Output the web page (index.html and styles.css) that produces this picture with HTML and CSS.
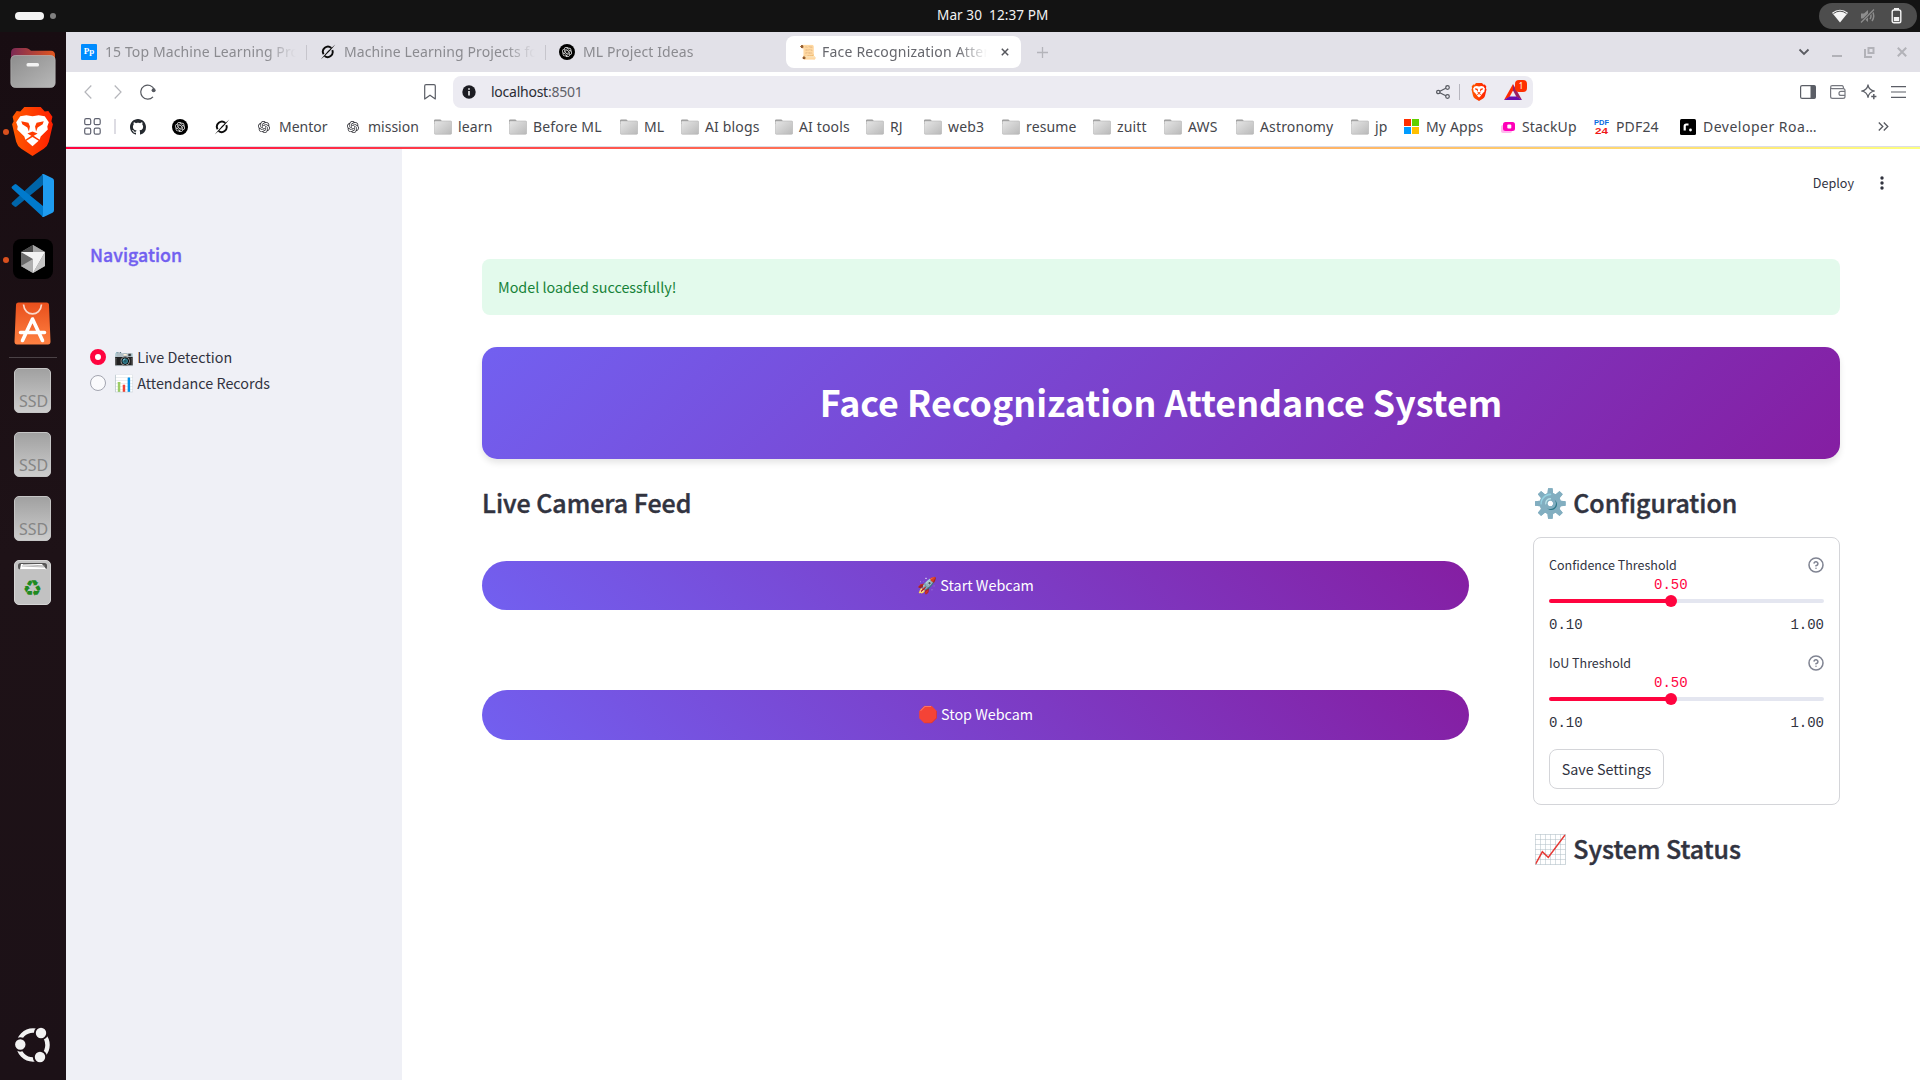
FILE: index.html
```html
<!DOCTYPE html>
<html lang="en">
<head>
<meta charset="utf-8">
<title>Face Recognization Attendance System</title>
<link rel="stylesheet" href="styles.css">
</head>
<body>
<svg class="defs" width="0" height="0" aria-hidden="true">
  <defs>
    <linearGradient id="folderFill" x1="0" y1="0" x2="1" y2="1"><stop offset="0" stop-color="#e6e6e6"/><stop offset="1" stop-color="#b9b9b9"/></linearGradient>
    <linearGradient id="filesBack" x1="0" y1="0" x2="1" y2="0"><stop offset="0" stop-color="#7c2a55"/><stop offset="1" stop-color="#e2561f"/></linearGradient>
    <linearGradient id="filesFront" x1="0" y1="0" x2="1" y2="1"><stop offset="0" stop-color="#8d8d8d"/><stop offset="1" stop-color="#b8b8b8"/></linearGradient>
    <linearGradient id="braveFill" x1="0" y1="0" x2="1" y2="0"><stop offset="0" stop-color="#ff5a00"/><stop offset="1" stop-color="#ff1f00"/></linearGradient>
    <linearGradient id="diskFill" x1="0" y1="0" x2="0" y2="1"><stop offset="0" stop-color="#a0a0a0"/><stop offset="1" stop-color="#cdcdcd"/></linearGradient>
    <linearGradient id="bagFill" x1="0" y1="0" x2="0" y2="1"><stop offset="0" stop-color="#e84f1c"/><stop offset="1" stop-color="#ff8142"/></linearGradient>
    <symbol id="folder" viewBox="0 0 18 16"><path d="M0 3V1.500Q0 .4 1.200 .4H6.500L8 2.200V5H0Z" fill="#9a9a9a"/><rect x=".3" y="2" width="17.400" height="13.300" rx="1.200" fill="url(#folderFill)" stroke="#b5b5b5" stroke-width=".6"/></symbol>
    <symbol id="knot" viewBox="0 0 24 24"><path d="M22.2819 9.8211a5.9847 5.9847 0 0 0-.5157-4.9108 6.0462 6.0462 0 0 0-6.5098-2.9A6.0651 6.0651 0 0 0 4.9807 4.1818a5.9847 5.9847 0 0 0-3.9977 2.9 6.0462 6.0462 0 0 0 .7427 7.0966 5.98 5.98 0 0 0 .511 4.9107 6.051 6.051 0 0 0 6.5146 2.9001A5.9847 5.9847 0 0 0 13.2599 24a6.0557 6.0557 0 0 0 5.7718-4.2058 5.9894 5.9894 0 0 0 3.9977-2.9001 6.0557 6.0557 0 0 0-.7475-7.0729zm-9.022 12.6081a4.4755 4.4755 0 0 1-2.8764-1.0408l.1419-.0804 4.7783-2.7582a.7948.7948 0 0 0 .3927-.6813v-6.7369l2.02 1.1686a.071.071 0 0 1 .038.052v5.5826a4.504 4.504 0 0 1-4.4945 4.4944zm-9.6607-4.1254a4.4708 4.4708 0 0 1-.5346-3.0137l.142.0852 4.783 2.7582a.7712.7712 0 0 0 .7806 0l5.8428-3.3685v2.3324a.0804.0804 0 0 1-.0332.0615L9.74 19.9502a4.4992 4.4992 0 0 1-6.1408-1.6464zM2.3408 7.8956a4.485 4.485 0 0 1 2.3655-1.9728V11.6a.7664.7664 0 0 0 .3879.6765l5.8144 3.3543-2.0201 1.1685a.0757.0757 0 0 1-.071 0l-4.8303-2.7865A4.504 4.504 0 0 1 2.3408 7.872zm16.5963 3.8558L13.1038 8.364 15.1192 7.2a.0757.0757 0 0 1 .071 0l4.8303 2.7913a4.4944 4.4944 0 0 1-.6765 8.1042v-5.6772a.79.79 0 0 0-.407-.667zm2.0107-3.0231l-.142-.0852-4.7735-2.7818a.7759.7759 0 0 0-.7854 0L9.409 9.2297V6.8974a.0662.0662 0 0 1 .0284-.0615l4.8303-2.7866a4.4992 4.4992 0 0 1 6.6802 4.66zM8.3065 12.863l-2.02-1.1638a.0804.0804 0 0 1-.038-.0567V6.0742a4.4992 4.4992 0 0 1 7.3757-3.4537l-.142.0805L8.704 5.459a.7948.7948 0 0 0-.3927.6813zm1.0976-2.3654l2.602-1.4998 2.6069 1.4998v2.9994l-2.5974 1.4997-2.6067-1.4997Z"/></symbol>
    <symbol id="knot-disc" viewBox="0 0 16 16"><circle cx="8" cy="8" r="8" fill="#000"/><use href="#knot" x="3" y="3" width="10" height="10" fill="#fff"/></symbol>
    <symbol id="slash-o" viewBox="0 0 16 16"><path d="M12.300 6.200A5 5 0 0 1 4.600 12M3.600 10.200A5 5 0 0 1 11.300 4" fill="none" stroke="#0b0b0b" stroke-width="1.900"/><path d="M.7 15.500 Q7 7 15.300 .6 Q12.500 4.200 9.800 7 Q5 12 .7 15.500Z" fill="#0b0b0b"/></symbol>
    <symbol id="lion" viewBox="0 0 40 48"><path d="M12 0H28L32 4.500L35.500 4L39.500 9.500L38.500 14L40 17L36 34Q35 38 31 41L20 48L9 41Q5 38 4 34L0 17L1.500 14L.5 9.500L4.500 4L8 4.500Z" fill="url(#braveFill)"/><path d="M14 8L20 9L26 8L32 9L36 15L34.500 19L35 22L28 29L27 32L20 27.500L13 32L12 29L5 22L5.500 19L4 15L8 9Z" fill="#fff"/><path d="M9 14L16 15.500L17.500 19L16.500 24L15 20L10 17ZM31 14L24 15.500L22.500 19L23.500 24L25 20L30 17ZM15 26L20 24L25 26L20 29Z" fill="#ff3b00"/><path d="M14 33L20 29.500L26 33L20 38.500Z" fill="#fff"/></symbol>
    <symbol id="help" viewBox="0 0 24 24"><g fill="none" stroke="#808492" stroke-width="2.300" stroke-linecap="round" stroke-linejoin="round"><circle cx="12" cy="12" r="10.500"/><path d="M9.090 9a3 3 0 0 1 5.830 1c0 2-3 3-3 3"/><path d="M12 17h.01"/></g></symbol>
    <symbol id="disk" viewBox="0 0 37 45"><rect x=".5" y=".5" width="36" height="44" rx="4.500" fill="url(#diskFill)" stroke="#c5c5c5"/><text x="5" y="39" class="disk-label">SSD</text></symbol>
  </defs>
</svg>

<header class="topbar">
  <div class="workspaces"><span class="ws-active"></span><span class="ws-dot"></span></div>
  <div class="clock">Mar 30&nbsp; 12:37 PM</div>
  <div class="sys-pill">
    <svg width="16" height="14" viewBox="0 0 16 14"><path d="M0 3.800Q8-2.400 16 3.800L8 13.500Z" fill="#f4f4f4"/><path d="M1.500 4.500Q8-.2 14.500 4.500" stroke="#4d4d4d" stroke-width="1" fill="none"/></svg>
    <svg class="vol" width="16" height="16" viewBox="0 0 16 16"><path d="M1 5.500H4L8 2V14L4 10.500H1Z" fill="#8d8d8d"/><path d="M10 5Q12 8 10 11M12 3Q15.500 8 12 13" stroke="#8d8d8d" stroke-width="1.500" fill="none"/><path d="M1 14.500L14 1.500" stroke="#4d4d4d" stroke-width="2.500"/><path d="M1 14.500L14 1.500" stroke="#8d8d8d" stroke-width="1.200"/></svg>
    <svg width="11" height="16" viewBox="0 0 11 16"><rect x="3" y="0" width="5" height="2" fill="#f4f4f4"/><rect x="1.200" y="2" width="8.600" height="12.800" rx="1.800" fill="none" stroke="#f4f4f4" stroke-width="1.400"/><rect x="2.800" y="9" width="5.400" height="4.200" fill="#f4f4f4"/></svg>
  </div>
</header>

<div class="desktop">
  <nav class="dock">
    <div class="slot"><svg width="46" height="41" viewBox="0 0 46 41"><path d="M1 6Q1 1 6 1H16Q18 1 19.500 2.500L21 3.800H41Q45 4 45 8V20H1Z" fill="url(#filesBack)"/><rect x=".8" y="8.500" width="44.400" height="32" rx="4.500" fill="url(#filesFront)" stroke="#c0c0c0" stroke-width=".6"/><rect x="16.500" y="16" width="12.500" height="3.600" rx="1.500" fill="#f3f3f3"/></svg></div>
    <div class="slot running"><svg width="41" height="49"><use href="#lion"/></svg></div>
    <div class="slot"><svg width="43" height="43" viewBox="0 0 43 43"><path d="M1 28.500L32 0V11L5.500 32.500Q4.500 33.300 3.500 32.500L1 30.500Q0 29.500 1 28.500Z" fill="#0065a9"/><path d="M1 14.500L32 43V32L5.500 10.500Q4.500 9.700 3.500 10.500L1 12.500Q0 13.500 1 14.500Z" fill="#007acc"/><path d="M31 .6Q32-.2 33.200 .3L41.500 4.300Q43 5 43 6.700V36.300Q43 38 41.500 38.700L33.200 42.700Q32 43.200 31 42.400Q32 42 32 40.500V2.500Q32 1 31 .6Z" fill="#1f9cf0"/></svg></div>
    <div class="slot running"><svg width="40" height="40" viewBox="0 0 40 40"><rect width="40" height="40" rx="8" fill="#000"/><path d="M20 6L32 13V27L20 34L8 27V13Z" fill="#858585"/><path d="M8 13L20 20V34L8 27Z" fill="#6a6a6a"/><path d="M8 13L20 6V13Z" fill="#4a4a4a"/><path d="M20 6L32 13H20Z" fill="#a5a5a5"/><path d="M8 13H32L20 34V20Z" fill="#f3f3f3"/><path d="M8 27L20 20V34Z" fill="#b0b0b0"/><path d="M32 13V27L20 34Z" fill="#c4c4c4"/></svg></div>
    <div class="slot"><svg width="37" height="43" viewBox="0 0 37 43"><path d="M2 3Q2 .5 4.500 .5H32.500Q35 .5 35 3L36.500 39.500Q36.500 42.500 34 42.500H3Q.5 42.500 .5 39.500Z" fill="url(#bagFill)"/><path d="M9.500 2.500C10.500 15 26.500 15 27.500 2.500" fill="none" stroke="#f8d9cc" stroke-width="1.700"/><path d="M8.500 38.500L18.500 17L28.500 38.500M6.500 30.500H30.500" fill="none" stroke="#fff" stroke-width="3.600" stroke-linecap="round" stroke-linejoin="round"/></svg></div>
    <div class="dock-sep"></div>
    <div class="slot"><svg width="37" height="45"><use href="#disk"/></svg></div>
    <div class="slot"><svg width="37" height="45"><use href="#disk"/></svg></div>
    <div class="slot"><svg width="37" height="45"><use href="#disk"/></svg></div>
    <div class="slot"><svg width="37" height="45" viewBox="0 0 37 45"><rect x=".5" y=".5" width="36" height="44" rx="4.500" fill="#c2c2c2" stroke="#d5d5d5"/><rect x="4" y="3" width="29" height="6.500" rx="2.500" fill="#555"/><path d="M6 9.500L7 4H28L32.500 9.500Z" fill="#fff"/><path d="M8 6L30 7M9 4.500L31 6" stroke="#999" stroke-width=".7"/><text x="18.500" y="36" text-anchor="middle" class="recycle">♻</text></svg></div>
    <div class="slot launcher"><svg width="36" height="36" viewBox="0 0 36 36"><circle cx="18" cy="18" r="14.500" fill="none" stroke="#f2f2f2" stroke-width="4.500"/><g fill="#f2f2f2" stroke="#1d1117" stroke-width="2"><circle cx="5.300" cy="17.500" r="6.200"/><circle cx="26" cy="6" r="6.200"/><circle cx="25" cy="30" r="6.200"/></g></svg></div>
  </nav>

  <div class="browser">
    <div class="tabstrip">
      <div class="tab t1"><span class="pp">Pp</span><span class="tab-title">15 Top Machine Learning Projects</span></div>
      <div class="tab t2"><svg width="16" height="16"><use href="#slash-o"/></svg><span class="tab-title">Machine Learning Projects for</span></div>
      <div class="tab t3"><svg width="16" height="16"><use href="#knot-disc"/></svg><span class="tab-title">ML Project Ideas</span></div>
      <div class="tab active"><span class="scroll">📜</span><span class="tab-title">Face Recognization Attendance</span><svg class="tab-close" width="8" height="8" viewBox="0 0 8 8"><path d="M.8 .8L7.200 7.200M7.200 .8L.8 7.200" stroke="#55565c" stroke-width="1.500"/></svg></div>
      <svg class="newtab" width="11" height="11" viewBox="0 0 11 11"><path d="M5.500 0V11M0 5.500H11" stroke="#b4b4ba" stroke-width="1.300"/></svg>
      <div class="win">
        <svg width="12" height="12" viewBox="0 0 12 12"><path d="M1.500 3.500L6 8L10.500 3.500" fill="none" stroke="#5a5b61" stroke-width="1.800"/></svg>
        <svg width="10" height="12" viewBox="0 0 10 12"><path d="M0 10H10" stroke="#b2b2b8" stroke-width="2"/></svg>
        <svg width="11" height="11" viewBox="0 0 11 11"><path d="M1 2V10H8" fill="none" stroke="#b2b2b8" stroke-width="2"/><rect x="4.500" y="1" width="5" height="5" fill="none" stroke="#b2b2b8" stroke-width="2"/></svg>
        <svg width="10" height="10" viewBox="0 0 10 10"><path d="M.8 .8L9.200 9.200M9.200 .8L.8 9.200" stroke="#b2b2b8" stroke-width="2"/></svg>
      </div>
    </div>

    <div class="toolbar">
      <svg class="back" width="8" height="14" viewBox="0 0 8 14"><path d="M7.300 .5L1 7L7.300 13.500" fill="none" stroke="#b5b6bb" stroke-width="1.200"/></svg>
      <svg class="fwd" width="8" height="14" viewBox="0 0 8 14"><path d="M.7 .5L7 7L.7 13.500" fill="none" stroke="#b5b6bb" stroke-width="1.200"/></svg>
      <svg class="reload" width="16" height="16" viewBox="0 0 16 16"><path d="M13 12.800A7 7 0 1 1 14.300 5.500" fill="none" stroke="#55585f" stroke-width="1.200"/><circle cx="13.600" cy="6.200" r="2" fill="#55585f"/></svg>
      <svg class="mark" width="12" height="16" viewBox="0 0 12 16"><path d="M.7 15V2Q.7 .7 2 .7H10Q11.300 .7 11.300 2V15L6 11.200Z" fill="none" stroke="#5b5e66" stroke-width="1.200" stroke-linejoin="round"/></svg>
      <div class="urlbar">
        <svg width="14" height="14" viewBox="0 0 14 14"><circle cx="7" cy="7" r="6.700" fill="#1c1c22"/><path d="M7 6V10.500M7 3.300V4.800" stroke="#fff" stroke-width="1.500"/></svg>
        <span class="url">localhost<span class="port">:8501</span></span>
        <svg class="share" width="14" height="14" viewBox="0 0 14 14"><g fill="none" stroke="#55585f" stroke-width="1.200"><circle cx="2.300" cy="7" r="1.700"/><circle cx="11.500" cy="2.500" r="1.800"/><circle cx="11.500" cy="11.500" r="1.800"/><path d="M3.800 6.200L9.800 3.200M3.800 7.800L9.800 10.800"/></g></svg>
        <span class="url-sep"></span>
        <svg width="16" height="18"><use href="#lion"/></svg>
        <span class="rewards"><svg width="18" height="16" viewBox="0 0 18 16"><path d="M9 0L0 16L5.500 13L9 6.500Z" fill="#ff2a00"/><path d="M9 0L18 16L12.500 13L9 6.500Z" fill="#9b1f63"/><path d="M0 16H18L12.500 12.600H5.500Z" fill="#6a0dad"/></svg><span class="badge">1</span></span>
      </div>
      <div class="tools">
        <svg width="16" height="14" viewBox="0 0 16 14"><rect x=".6" y=".6" width="14.800" height="12.800" rx="1.500" fill="none" stroke="#5b5e66" stroke-width="1.200"/><path d="M10.500 .6H14.500Q15.400 .6 15.400 1.500V12.500Q15.400 13.400 14.500 13.400H10.500Z" fill="#5b5e66"/></svg>
        <svg width="16" height="14" viewBox="0 0 16 14"><path d="M.6 3V11.500Q.6 13.400 2.500 13.400H13Q15 13.400 15 11.500V5.500Q15 3.600 13 3.600H2Q.6 3.600 .6 2.200Q.6 .7 2.200 .7H12Q13.500 .7 13.500 3.600M15 6.400H11Q9 6.400 9 8.400Q9 10.400 11 10.400H15" fill="none" stroke="#76787f" stroke-width="1.200"/></svg>
        <svg width="16" height="16" viewBox="0 0 16 16"><path d="M7 .8Q7.800 6 13.500 7Q7.800 8 7 13.500Q6.200 8 .6 7Q6.200 6 7 .8Z" fill="none" stroke="#5b5e66" stroke-width="1.200" stroke-linejoin="round"/><path d="M12.800 10V15.200M10.200 12.600H15.400" stroke="#5b5e66" stroke-width="1.500"/></svg>
        <svg width="15" height="12" viewBox="0 0 15 12"><path d="M0 .7H15M0 6H15M0 11.300H15" stroke="#5b5e66" stroke-width="1.200"/></svg>
      </div>
    </div>

    <div class="bookmarks">
      <svg class="apps" width="17" height="17" viewBox="0 0 17 17"><g fill="none" stroke="#5f6270" stroke-width="1.200"><rect x=".7" y=".7" width="6" height="6" rx="1.500"/><rect x="10.200" y=".7" width="6" height="6" rx="1.500"/><rect x=".7" y="10.200" width="6" height="6" rx="1.500"/><rect x="10.200" y="10.200" width="6" height="6" rx="1.500"/></g></svg>
      <span class="bm-sep"></span>
      <svg width="16" height="16" viewBox="0 0 16 16"><path fill="#24292f" d="M8 0C3.580 0 0 3.580 0 8c0 3.540 2.290 6.530 5.470 7.590.4.070.55-.17.55-.38 0-.19-.01-.82-.01-1.490-2.010.37-2.530-.49-2.690-.94-.09-.23-.48-.94-.82-1.130-.28-.15-.68-.52-.01-.53.63-.01 1.080.58 1.230.82.72 1.210 1.870.87 2.330.66.070-.52.28-.87.51-1.070-1.780-.2-3.640-.89-3.640-3.950 0-.87.31-1.590.82-2.150-.08-.2-.36-1.020.08-2.120 0 0 .67-.21 2.200.82.64-.18 1.320-.27 2-.27s1.360.09 2 .27c1.530-1.040 2.200-.82 2.200-.82.44 1.100.16 1.920.08 2.120.51.56.82 1.270.82 2.150 0 3.070-1.870 3.750-3.650 3.950.29.25.54.73.54 1.480 0 1.070-.01 1.930-.01 2.200 0 .21.15.46.55.38A8.010 8.010 0 0016 8c0-4.420-3.580-8-8-8z"/></svg>
      <svg width="16" height="16"><use href="#knot-disc"/></svg>
      <svg width="16" height="16"><use href="#slash-o"/></svg>
      <div class="bm knot"><svg width="12" height="12" fill="#2f2f35"><use href="#knot"/></svg>Mentor</div>
      <div class="bm knot"><svg width="12" height="12" fill="#2f2f35"><use href="#knot"/></svg>mission</div>
      <div class="bm"><svg width="18" height="16"><use href="#folder"/></svg>learn</div>
      <div class="bm"><svg width="18" height="16"><use href="#folder"/></svg>Before ML</div>
      <div class="bm"><svg width="18" height="16"><use href="#folder"/></svg>ML</div>
      <div class="bm"><svg width="18" height="16"><use href="#folder"/></svg>AI blogs</div>
      <div class="bm"><svg width="18" height="16"><use href="#folder"/></svg>AI tools</div>
      <div class="bm"><svg width="18" height="16"><use href="#folder"/></svg>RJ</div>
      <div class="bm"><svg width="18" height="16"><use href="#folder"/></svg>web3</div>
      <div class="bm"><svg width="18" height="16"><use href="#folder"/></svg>resume</div>
      <div class="bm"><svg width="18" height="16"><use href="#folder"/></svg>zuitt</div>
      <div class="bm"><svg width="18" height="16"><use href="#folder"/></svg>AWS</div>
      <div class="bm"><svg width="18" height="16"><use href="#folder"/></svg>Astronomy</div>
      <div class="bm"><svg width="18" height="16"><use href="#folder"/></svg>jp</div>
      <div class="bm site"><svg width="15" height="15" viewBox="0 0 15 15"><path d="M0 0H7V7H0Z" fill="#ff2f00"/><path d="M8 0H15V7H8Z" fill="#5fd000"/><path d="M0 8H7V15H0Z" fill="#009cff"/><path d="M8 8H15V15H8Z" fill="#ffc000"/></svg>My Apps</div>
      <div class="bm site"><svg width="14" height="12" viewBox="0 0 14 12"><rect x="0" y="4" width="11" height="8" rx="2" fill="#ffb8ee"/><rect x="2" y="1" width="12" height="9" rx="2.500" fill="#ff00b8"/><rect x="6.300" y="3.500" width="4" height="4" rx="1" fill="#fff"/></svg>StackUp</div>
      <div class="bm site"><svg width="15" height="15" viewBox="0 0 15 15"><text x="0" y="6" class="pdf pdf-top" textLength="15" lengthAdjust="spacingAndGlyphs">PDF</text><text x="1" y="14.500" class="pdf pdf-num" textLength="13" lengthAdjust="spacingAndGlyphs">24</text></svg>PDF24</div>
      <div class="bm site roadmap"><svg width="16" height="16" viewBox="0 0 16 16"><rect width="16" height="16" rx="1.500" fill="#000"/><path d="M4.700 11.500V7Q4.700 5.500 6.200 5.500H8.500" fill="none" stroke="#fff" stroke-width="2.200"/><circle cx="10.500" cy="11" r="1.400" fill="#fff"/></svg>Developer Roa…</div>
      <svg class="more" width="11" height="9" viewBox="0 0 11 9"><path d="M.8 .5L4.800 4.500L.8 8.500M5.800 .5L9.800 4.500L5.800 8.500" fill="none" stroke="#55585f" stroke-width="1.300"/></svg>
    </div>
    <div class="decoration"></div>

    <div class="app">
      <aside class="sidebar">
        <h3 class="nav-title">Navigation</h3>
        <div class="radio on"><span class="knob"></span><span><span class="emoji">📷</span> Live Detection</span></div>
        <div class="radio"><span class="knob"></span><span><span class="emoji">📊</span> Attendance Records</span></div>
      </aside>
      <main class="main">
        <div class="app-head"><span>Deploy</span><svg width="4" height="14" viewBox="0 0 4 14" fill="#31333f"><circle cx="2" cy="2" r="1.700"/><circle cx="2" cy="7" r="1.700"/><circle cx="2" cy="12" r="1.700"/></svg></div>
        <div class="alert">Model loaded successfully!</div>
        <div class="hero">Face Recognization Attendance System</div>
        <div class="columns">
          <section class="feed">
            <h3 class="heading">Live Camera Feed</h3>
            <div class="cta start"><span class="emoji">🚀</span> Start Webcam</div>
            <div class="cta stop"><span class="emoji">🛑</span> Stop Webcam</div>
          </section>
          <section class="config">
            <h3 class="heading"><span class="emoji">⚙️</span> Configuration</h3>
            <div class="card">
              <div class="slider">
                <div class="label"><span>Confidence Threshold</span><svg width="16" height="16"><use href="#help"/></svg></div>
                <div class="value">0.50</div>
                <div class="track"><span class="thumb"></span></div>
                <div class="range"><span>0.10</span><span>1.00</span></div>
              </div>
              <div class="slider">
                <div class="label"><span>IoU Threshold</span><svg width="16" height="16"><use href="#help"/></svg></div>
                <div class="value">0.50</div>
                <div class="track"><span class="thumb"></span></div>
                <div class="range"><span>0.10</span><span>1.00</span></div>
              </div>
              <div class="save">Save Settings</div>
            </div>
            <h3 class="heading"><span class="emoji">📈</span> System Status</h3>
          </section>
        </div>
      </main>
    </div>
  </div>
</div>
</body>
</html>
```
FILE: styles.css
```css
* { box-sizing: border-box; }
body {
  margin: 0; width: 1920px; height: 1080px; overflow: hidden;
  display: flex; flex-direction: column; background: #fff;
  font-family: "Noto Sans", sans-serif; font-size: 14px;
}
svg { display: block; flex: none; }
.defs { position: absolute; }
h3 { margin: 0; }

/* desktop top bar */
.topbar {
  height: 32px; flex: none; background: #131313; color: #f2f2f2;
  display: grid; grid-template-columns: 1fr auto 1fr; align-items: center;
  padding: 0 3px 0 15px;
}
.workspaces { display: flex; align-items: center; gap: 6px; }
.ws-active { width: 29px; height: 8px; border-radius: 4px; background: #f4f4f4; }
.ws-dot { width: 6px; height: 6px; border-radius: 50%; background: #808080; }
.clock { width: 112px; margin-left: 54px; white-space: nowrap; font-size: 13.6px; line-height: 30px; padding-bottom: 2px; letter-spacing: .05px; }
.sys-pill {
  justify-self: end; width: 98px; height: 26px; border-radius: 13px; background: #4d4d4d;
  display: flex; align-items: center; justify-content: space-between; padding: 0 15px 0 13px;
}
.vol { margin-right: 3px; }

.desktop { flex: 1; display: flex; min-height: 0; }

/* dock */
.dock {
  width: 66px; flex: none; padding-top: 3px; display: flex; flex-direction: column;
  background: linear-gradient(#180d12, #1e1217 50%, #1c1117);
}
.slot { height: 64px; flex: none; display: flex; align-items: center; justify-content: center; position: relative; padding-right: 1px; }
.running::before {
  content: ""; position: absolute; left: 3px; top: 30px; width: 6px; height: 6px;
  border-radius: 50%; background: #d9501e;
}
.dock-sep { height: 1px; margin: 2px 9px 0; flex: none; background: #4b4246; }
.launcher { margin-top: auto; margin-bottom: 3px; }
.disk-label { font: 16px "Noto Sans", sans-serif; fill: #858585; }
.recycle { font: 22px "DejaVu Sans", sans-serif; fill: #1f8a1f; }

/* browser chrome */
.browser { flex: 1; display: flex; flex-direction: column; min-width: 0; }
.tabstrip { height: 40px; flex: none; background: #e2e1e8; display: flex; align-items: center; color: #8b8b90; }
.tab { height: 32px; display: flex; align-items: center; white-space: nowrap; }
.tab-title {
  flex: 1; overflow: hidden; line-height: 20px; margin-left: 8px; letter-spacing: .1px;
  -webkit-mask-image: linear-gradient(90deg, #000 calc(100% - 30px), transparent);
  mask-image: linear-gradient(90deg, #000 calc(100% - 30px), transparent);
}
.t1 { width: 226px; margin-left: 15px; }
.t2 { width: 226px; margin-left: 13px; }
.t3 { width: 200px; margin-left: 13px; }
.t1, .t2 { position: relative; padding-right: 11px; }
.t1::after, .t2::after { content: ""; position: absolute; right: 0; top: 9px; width: 1px; height: 15px; background: #c6c5cc; }
.active { width: 235px; margin-left: 27px; background: #fff; border-radius: 8px; padding: 0 12px 0 13px; color: #66676d; }
.active .tab-title { margin: 0 14px 0 7px; letter-spacing: .2px; }
.scroll { width: 16px; font: 14px/18px "Noto Color Emoji", sans-serif; }
.pp { width: 16px; height: 16px; border-radius: 1px; background: #008cff; color: #fff; font: bold 9px/15px "Liberation Serif", serif; text-align: center; }
.newtab { margin-left: 16px; }
.win { margin-left: auto; margin-right: 13px; display: flex; align-items: center; gap: 22px; }

.toolbar { height: 38px; flex: none; display: flex; align-items: center; padding: 2px 14px 0 18px; }
.fwd { margin-left: 22px; }
.reload { margin-left: 18px; }
.mark { margin-left: 268px; }
.urlbar {
  width: 1080px; height: 32px; margin-left: 17px; border-radius: 8px; background: #ecebf2;
  display: flex; align-items: center; padding: 0 11px 0 9px;
}
.url { margin-left: 15px; color: #2a2b33; letter-spacing: -.25px; line-height: 20px; }
.port { color: #5f6068; }
.share { margin-left: auto; }
.url-sep { width: 1px; height: 16px; background: #b7b6bf; margin: 0 11px 0 9px; }
.rewards { position: relative; margin-left: 17px; }
.badge {
  position: absolute; left: 11px; top: -4px; width: 12px; height: 12px; border-radius: 4px;
  background: #ff2f00; color: #fff; font-size: 8px; line-height: 12px; text-align: center;
}
.tools { margin-left: auto; display: flex; align-items: center; gap: 14.5px; }

.bookmarks {
  height: 36px; flex: none; align-items: center; padding: 0 0 3px 18px; color: #45464c;
  display: grid;
  grid-template-columns: 30px 16px 42px 42px 44px 89px 87px 75px 111px 61px 94px 91px 58px 78px 91px 71px 72px 115px 53px 97px 93px 86px 198px 20px;
}
.bm-sep { width: 2px; height: 15px; background: #dddce3; }
.bm { display: flex; align-items: center; gap: 6px; white-space: nowrap; line-height: 20px; letter-spacing: .15px; }
.bm.knot { gap: 9px; letter-spacing: 0; }
.bm.site { gap: 7px; }
.bm.roadmap { letter-spacing: .5px; }
.pdf { font: bold 7px "Liberation Sans", sans-serif; letter-spacing: 0; }
.pdf-top { fill: #0a6be0; }
.pdf-num { fill: #f01818; font-size: 9px; }
.decoration {
  height: 3px; flex: none; border-top: 1px solid #dcdce6;
  background: linear-gradient(90deg, #ff043f, #ff4b4b 25%, #ff8f5e 50%, #ffc36a 75%, #fdff80);
  background-clip: padding-box;
}

/* app */
.app {
  flex: 1; display: flex; min-height: 0; color: #31333f;
  font-family: "Noto Sans CJK SC", "Noto Sans CJK JP", sans-serif; font-size: 14.35px; line-height: 24px;
}
.emoji { font-family: "Noto Color Emoji", sans-serif; font-size: 1.115em; line-height: 1; }
.sidebar { width: 336px; flex: none; background: #eff0f6; padding: 92px 24px 0; display: flex; flex-direction: column; }
.nav-title { font-size: 17.8px; font-weight: 500; line-height: 26px; color: #7260f0; margin-bottom: 77px; -webkit-text-stroke: .35px #7260f0; }
.radio { display: flex; align-items: center; gap: 8px; height: 26px; white-space: nowrap; }
.knob { width: 16px; height: 16px; flex: none; border-radius: 50%; border: 1px solid #a3a5b0; background: #fafafc; }
.on .knob { border: 5px solid #ff043f; background: #fff; }
.main { flex: 1; padding: 0 80px; display: flex; flex-direction: column; }
.app-head {
  height: 110px; flex: none; margin-right: -44px; padding-top: 22px; font-size: 12.6px;
  display: flex; justify-content: flex-end; align-items: flex-start; gap: 26px;
}
.app-head svg { margin-top: 5px; }
.alert { height: 56px; flex: none; border-radius: 8px; background: #e3faec; color: #168238; padding: 16px; }
.hero {
  height: 112px; flex: none; margin-top: 32px; border-radius: 15px; color: #fff; text-align: center;
  font-size: 35.77px; font-weight: 700; line-height: 109px; white-space: nowrap;
  background: linear-gradient(135deg, #7260f0, #851ea2); box-shadow: 0 4px 6px rgba(0,0,0,.1);
}
.columns { display: grid; grid-template-columns: 987px 307px; justify-content: space-between; margin-top: 26px; }
.heading { font-size: 24.95px; font-weight: 500; height: 34px; line-height: 34px; white-space: nowrap; -webkit-text-stroke: .45px #31333f; }
.cta {
  height: 49px; border-radius: 25px; color: #fff; text-align: center; line-height: 48px;
  background: linear-gradient(45deg, #7260f0, #851ea2);
}
.start { margin-top: 42px; }
.stop { margin-top: 80px; height: 50px; }
.card { margin: 18px 0 26px; height: 268px; border: 1px solid #d4d5d9; border-radius: 8px; padding: 15px 15px; }
.slider { height: 98px; }
.label { display: flex; justify-content: space-between; align-items: center; height: 24px; font-size: 12.5px; }
.value { width: 34px; margin: -2px 0 0 105px; color: #ff043f; }
.value, .range { font: 14px/20px "Liberation Mono", monospace; }
.track { position: relative; height: 4px; margin-top: 4px; border-radius: 2px; background: linear-gradient(90deg, #ff043f 44.440%, #e4e6f0 44.440%); }
.thumb { position: absolute; left: 116px; top: -4px; width: 12px; height: 12px; border-radius: 50%; background: #ff043f; }
.range { display: flex; justify-content: space-between; margin-top: 12px; }
.save { width: 115px; height: 40px; border: 1px solid #d4d5d9; border-radius: 8px; text-align: center; line-height: 38px; white-space: nowrap; }
```
